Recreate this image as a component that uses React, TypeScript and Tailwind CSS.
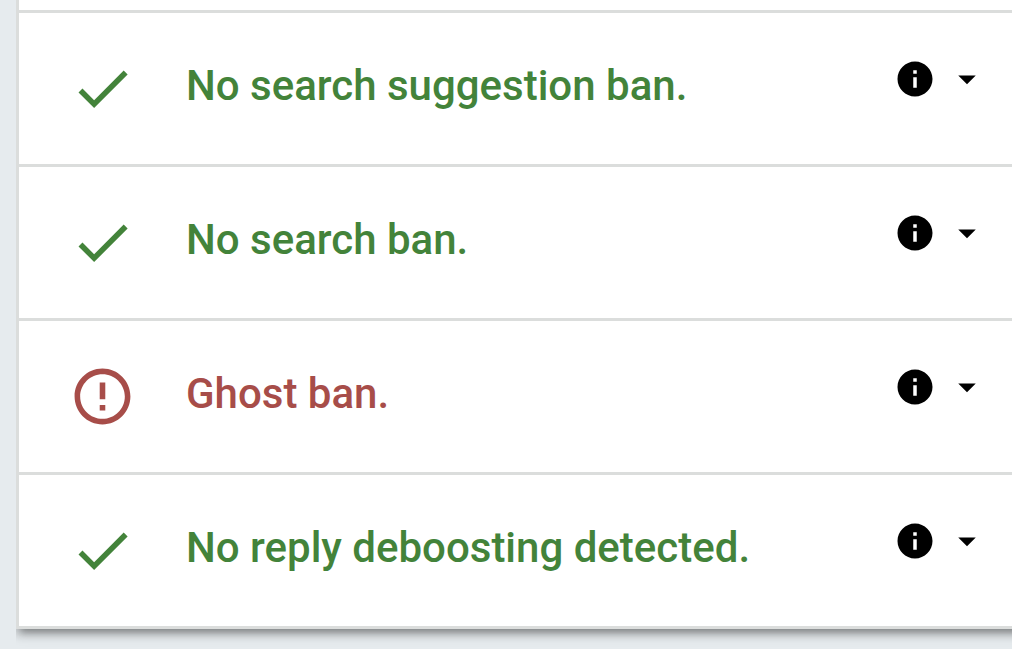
import React from 'react';
import { MdArrowDropDown, MdCheck, MdErrorOutline, MdInfo } from 'react-icons/md';

const results = [
  { id: 'suggestion', text: 'No search suggestion ban.', ok: true },
  { id: 'search', text: 'No search ban.', ok: true },
  { id: 'ghost', text: 'Ghost ban.', ok: false },
  { id: 'reply', text: 'No reply deboosting detected.', ok: true },
];

const ResultRow = ({ text, ok }: { text: string; ok: boolean }) => {
  const Icon = ok ? MdCheck : MdErrorOutline;
  return (
    <li
      className={`flex items-center h-[154px] pl-[50px] pr-10 border-b-3 border-[#dbdddc] ${
        ok ? 'text-[#43833a]' : 'text-[#a74d49]'
      }`}
    >
      <Icon className="size-[67px] shrink-0" />
      <h2 className="flex-1 pl-[50px] pb-1.5 text-[42px] leading-[64px] font-medium whitespace-nowrap">
        {text}
      </h2>
      <button
        type="button"
        aria-label={`About: ${text}`}
        className="flex items-center gap-2.5 pb-5 text-black"
      >
        <MdInfo className="size-[42px]" />
        <MdArrowDropDown className="size-[42px]" />
      </button>
    </li>
  );
};

const App = () => {
  return (
    <div className="min-h-screen bg-[#e6ebee] pl-4 font-[Roboto,sans-serif]">
      <main className="overflow-hidden pb-5">
        {/* The card runs past the right edge of the page */}
        <div className="-mr-4 bg-white border-l-3 border-[#dbdddc] shadow-[0_9px_6px_-6px_rgba(0,0,0,0.2),0_6px_8px_0_rgba(0,0,0,0.16),0_3px_14px_0_rgba(0,0,0,0.2)]">
          {/* Bottom edge of the row above */}
          <div className="h-[13px] border-b-3 border-[#dbdddc]" />
          <ul>
            {results.map((r) => (
              <ResultRow key={r.id} text={r.text} ok={r.ok} />
            ))}
          </ul>
        </div>
      </main>
    </div>
  );
};

export default App;
